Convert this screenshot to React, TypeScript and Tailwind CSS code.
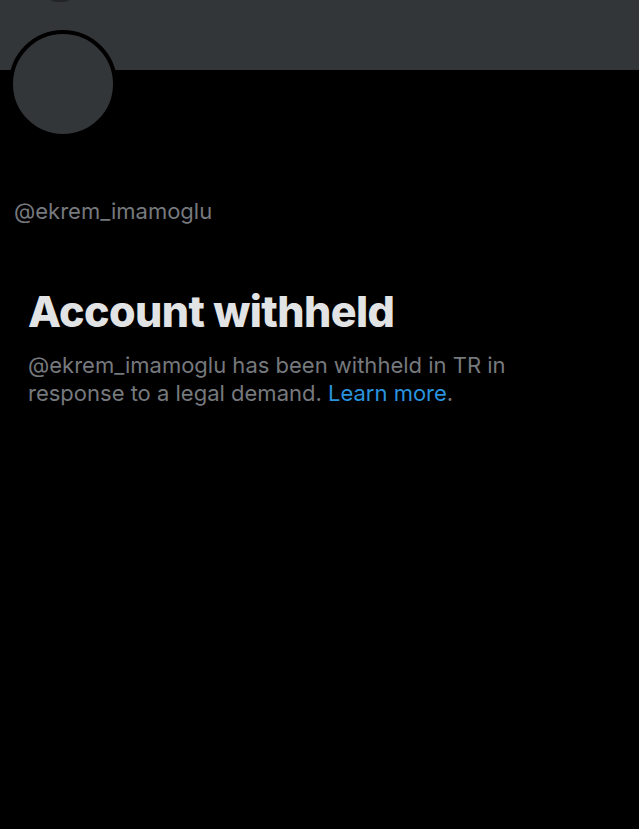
export default function App() {
  return (
    <div className="relative h-[829px] w-[639px] overflow-hidden bg-black font-['Inter',sans-serif]">
      {/* banner */}
      <div className="h-[70px] w-full bg-[#333639]" />
      <div className="absolute left-[50px] top-[-8px] h-[10px] w-[20px] rounded-full bg-[#222426]" />

      {/* avatar */}
      <div className="absolute left-[9px] top-[30px] h-[108px] w-[108px] rounded-full border-[4px] border-black bg-[#333639]" />

      <div className="pt-[127px]">
        <div className="px-[14px] text-[22px] leading-[28px] text-[#76797d]">
          @ekrem_imamoglu
        </div>

        <div className="px-[28px] pt-[62px]">
          <h1 className="text-[43px] font-extrabold leading-[48px] tracking-[-0.6px] text-[#e2e3e4]">
            Account withheld
          </h1>
          <p className="mt-[16px] w-[540px] text-[22px] leading-[28px] text-[#76797d]">
            @ekrem_imamoglu has been withheld in TR in response to a legal demand.{' '}
            <span className="text-[#2a93de]">Learn more</span>.
          </p>
        </div>
      </div>
    </div>
  );
}
